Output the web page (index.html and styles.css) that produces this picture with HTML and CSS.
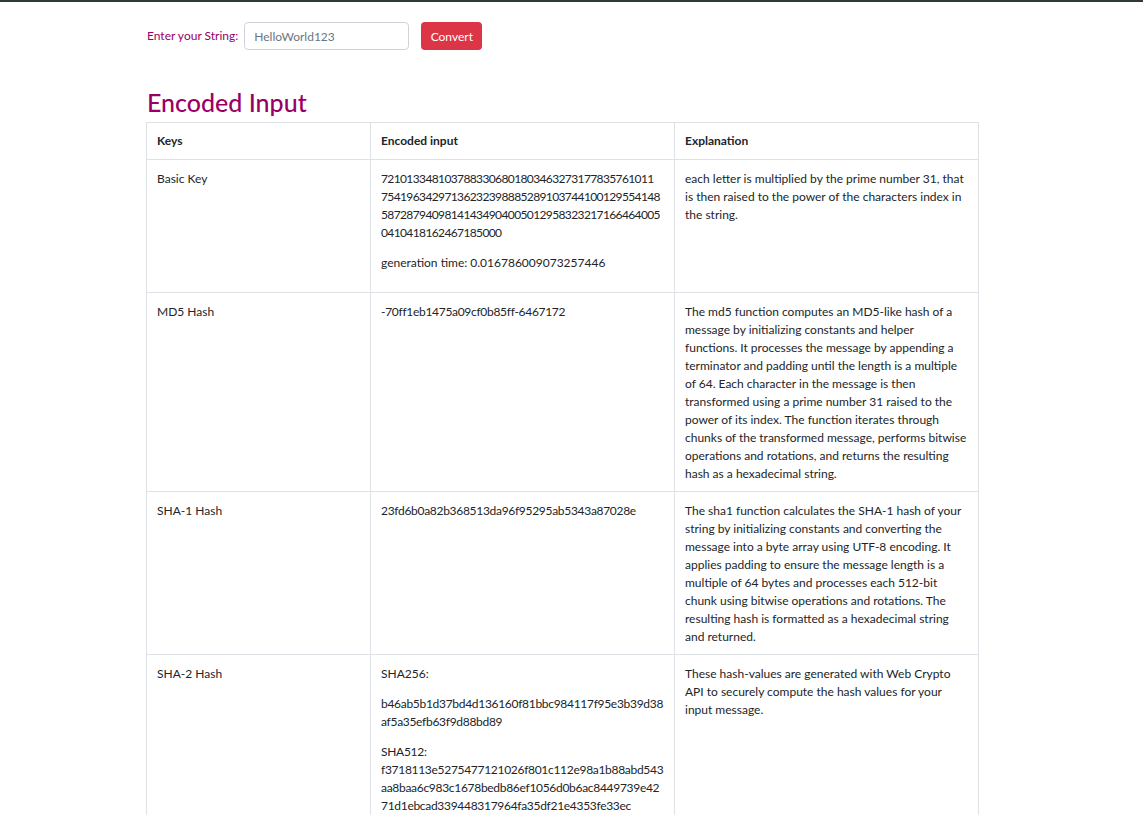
FILE: index.html
```html
<!DOCTYPE html>
<html lang="en">
<head>
<meta charset="utf-8">
<title>Encoder</title>
<link rel="stylesheet" href="styles.css">
</head>
<body>
<div class="page">
  <form class="entry">
    <label class="entry-label" for="str">Enter your String:</label>
    <input class="entry-input" id="str" type="text" value="HelloWorld123">
    <button class="btn-convert" type="button">Convert</button>
  </form>

  <h1 class="title">Encoded Input</h1>

  <table class="results">
    <colgroup>
      <col class="c-key">
      <col class="c-enc">
      <col class="c-exp">
    </colgroup>
    <thead>
      <tr><th>Keys</th><th>Encoded input</th><th>Explanation</th></tr>
    </thead>
    <tbody>
      <tr>
        <td>Basic Key</td>
        <td>
          <p class="code digits">7210133481037883306801803463273177835761011<br>75419634297136232398885289103744100129554148<br>58728794098141434904005012958323217166464005<br>0410418162467185000</p>
          <p>generation time: 0.016786009073257446</p>
        </td>
        <td>each letter is multiplied by the prime number 31, that is then raised to the power of the characters index in the string.</td>
      </tr>
      <tr>
        <td>MD5 Hash</td>
        <td><p class="code">-70ff1eb1475a09cf0b85ff-6467172</p></td>
        <td>The md5 function computes an MD5-like hash of a message by initializing constants and helper functions. It processes the message by appending a terminator and padding until the length is a multiple of 64. Each character in the message is then transformed using a prime number 31 raised to the power of its index. The function iterates through chunks of the transformed message, performs bitwise operations and rotations, and returns the resulting hash as a hexadecimal string.</td>
      </tr>
      <tr>
        <td>SHA-1 Hash</td>
        <td><p class="code">23fd6b0a82b368513da96f95295ab5343a87028e</p></td>
        <td>The sha1 function calculates the SHA-1 hash of your string by initializing constants and converting the message into a byte array using UTF-8 encoding. It applies padding to ensure the message length is a multiple of 64 bytes and processes each 512-bit chunk using bitwise operations and rotations. The resulting hash is formatted as a hexadecimal string and returned.</td>
      </tr>
      <tr>
        <td>SHA-2 Hash</td>
        <td>
          <p>SHA256:</p>
          <p class="code">b46ab5b1d37bd4d136160f81bbc984117f95e3b39d38<br>af5a35efb63f9d88bd89</p>
          <p class="code">SHA512:<br>f3718113e5275477121026f801c112e98a1b88abd543<br>aa8baa6c983c1678bedb86ef1056d0b6ac8449739e42<br>71d1ebcad339448317964fa35df21e4353fe33ec</p>
        </td>
        <td>These hash-values are generated with Web Crypto API to securely compute the hash values for your input message.</td>
      </tr>
    </tbody>
  </table>
</div>
</body>
</html>
```

FILE: styles.css
```css
html, body {
  margin: 0;
  padding: 0;
  background: #ffffff;
}

body {
  border-top: 2px solid #2f3a35;
  font-family: Lato, "Noto Sans", "Liberation Sans", sans-serif;
  font-size: 12px;
  line-height: 18px;
  color: #212529;
}

.page {
  padding: 20px 0 40px 146px;
  width: 832px;
}

.entry {
  display: flex;
  align-items: center;
  height: 28px;
  margin: 0;
}

.entry-label {
  color: #990066;
  margin-left: 1px;
  margin-right: 6px;
}

.entry-input {
  box-sizing: border-box;
  width: 165px;
  height: 28px;
  padding: 0 9px;
  border: 1px solid #ced4da;
  border-radius: 4px;
  font-family: inherit;
  font-size: 12px;
  color: #6c757d;
  background: #fff;
  margin-right: 12px;
}

.btn-convert {
  box-sizing: border-box;
  width: 61px;
  height: 28px;
  border: none;
  border-radius: 4px;
  background: #dc3545;
  color: #fff;
  font-family: inherit;
  font-size: 12px;
  padding: 0;
}

.title {
  margin: 38px 0 5px 1px;
  font-size: 25px;
  line-height: 29px;
  font-weight: 500;
  color: #990066;
}

.results {
  width: 832px;
  table-layout: fixed;
  border-collapse: collapse;
}

.c-key { width: 224px; }
.c-enc { width: 304px; }
.c-exp { width: 304px; }

.results th,
.results td {
  border: 1px solid #dee2e6;
  padding: 9px 10px;
  text-align: left;
  vertical-align: top;
}

.results td {
  padding: 10px 10px 8px;
}

.results th {
  font-weight: 700;
}

.results p {
  margin: 0 0 12px;
}

.code {
  word-break: break-all;
  letter-spacing: -0.3px;
}

.code.digits {
  letter-spacing: -0.62px;
}
```
